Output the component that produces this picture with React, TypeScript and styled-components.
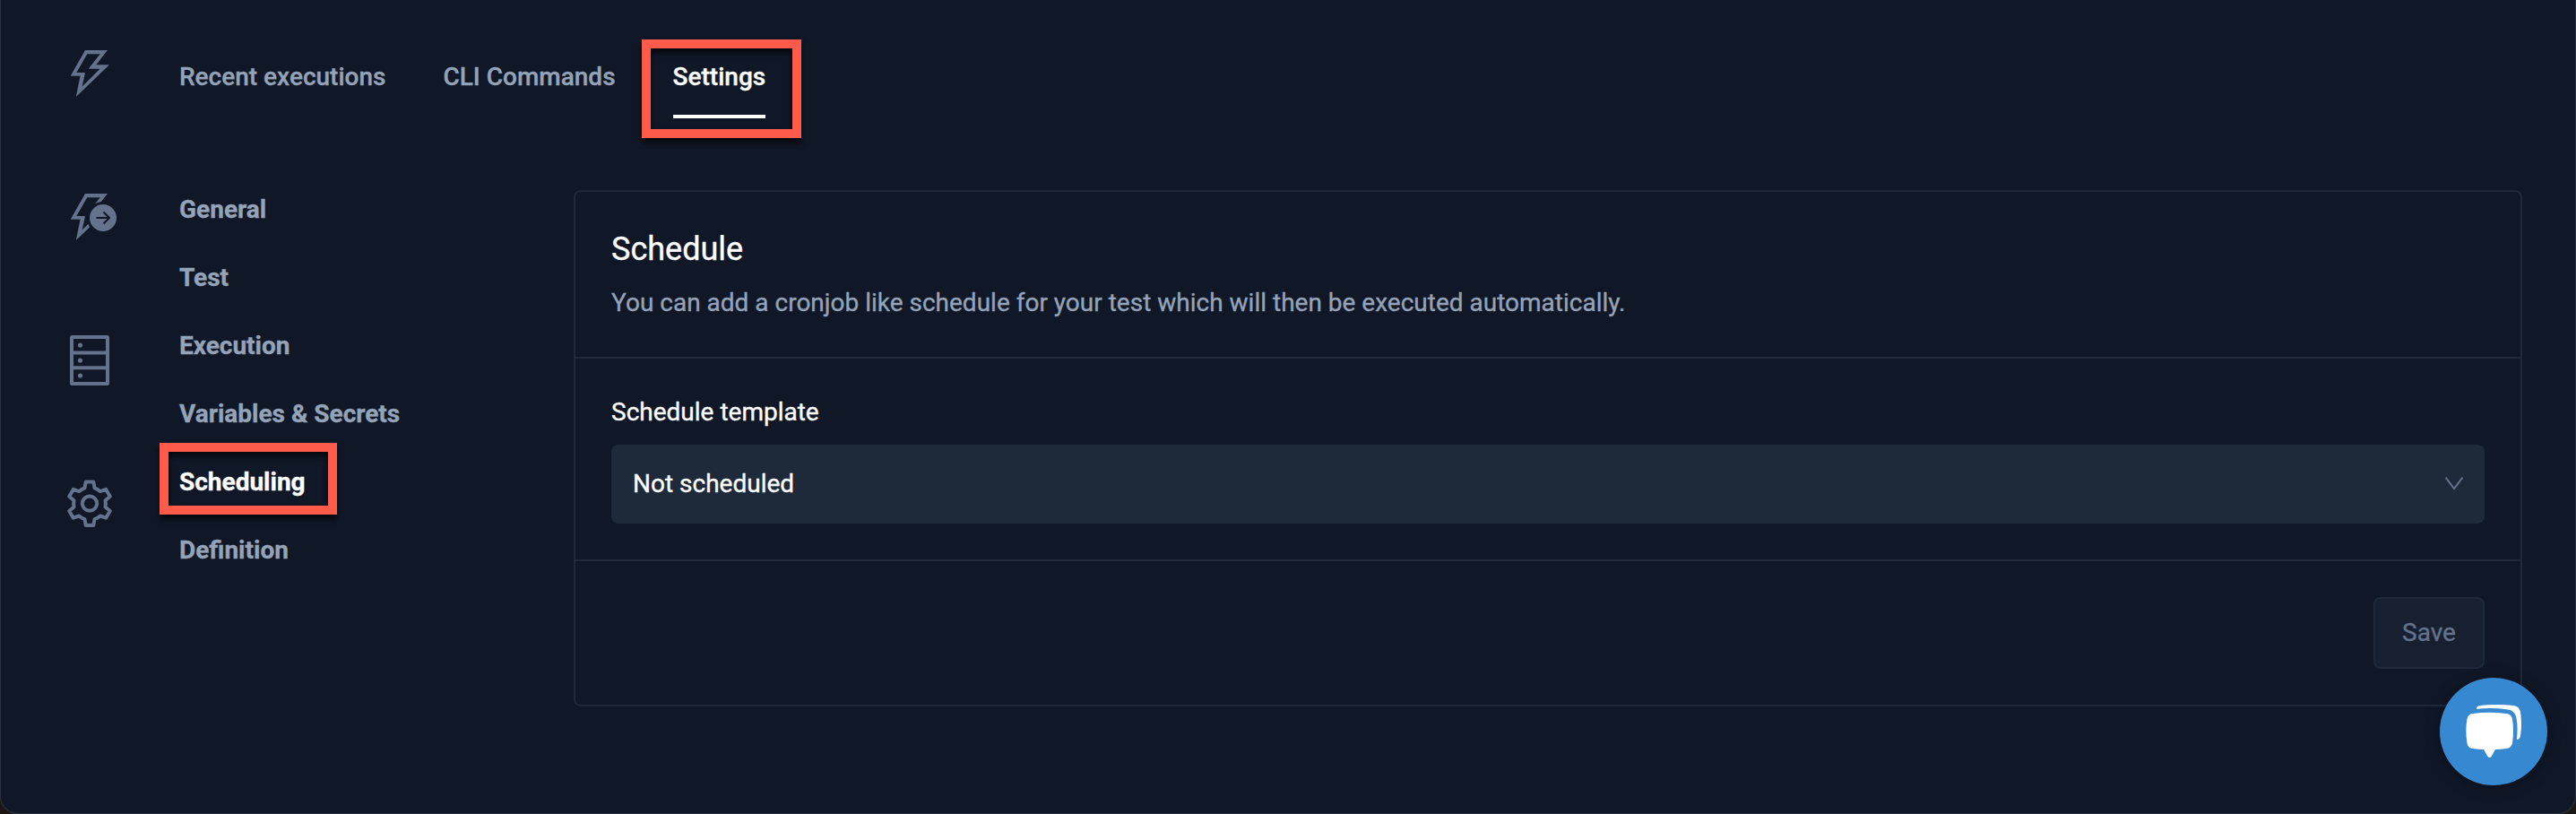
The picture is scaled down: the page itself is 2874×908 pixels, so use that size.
import React from "react";
import styled, { createGlobalStyle } from "styled-components";

const c = {
  bg: "#101726",
  line: "#1e293a",
  muted: "#94a3b8",
  icon: "#64728c",
  white: "#ffffff",
  red: "#ff5b4a",
  blue: "#3688d1",
};

const GlobalStyle = createGlobalStyle`
  * { box-sizing: border-box; }
  body {
    margin: 0;
    background: #1b1814;
    font-family: Roboto, "Liberation Sans", sans-serif;
    font-size: 28px;
    line-height: 44px;
    color: ${c.white};
    -webkit-text-stroke: 0.35px currentColor;
  }
`;

const Window = styled.div`
  position: relative;
  display: flex;
  width: 2874px;
  height: 908px;
  background: ${c.bg};
  border: 1px solid #2b3340;
  border-top: 0;
  border-radius: 0 0 20px 20px;
  overflow: hidden;
`;

const Rail = styled.nav`
  display: flex;
  flex-direction: column;
  align-items: center;
  gap: 96px;
  width: 198px;
  padding: 50px 0 0 0;
  svg { display: block; }
`;

const Content = styled.main`
  display: flex;
  flex-direction: column;
  flex: 1;
  min-width: 0;
  padding: 0 59px 0 1px;
`;

const Tabs = styled.div`
  display: flex;
  gap: 64px;
  padding-top: 64px;
  height: 212px;
`;

const Tab = styled.div<{ $active?: boolean }>`
  position: relative;
  height: 68px;
  font-weight: 500;
  white-space: nowrap;
  color: ${(p) => (p.$active ? c.white : c.muted)};
  border-bottom: 4px solid ${(p) => (p.$active ? c.white : "transparent")};
`;

const Highlight = styled.span<{ $top: number; $left: number; $w: number; $h: number }>`
  position: absolute;
  top: ${(p) => p.$top}px;
  left: ${(p) => p.$left}px;
  width: ${(p) => p.$w}px;
  height: ${(p) => p.$h}px;
  border: 10px solid ${c.red};
  filter: drop-shadow(0 5px 3px rgba(0, 0, 0, 0.7));
`;

const Body = styled.div`
  display: flex;
  align-items: flex-start;
`;

const Menu = styled.ul`
  display: flex;
  flex-direction: column;
  gap: 32px;
  width: 440px;
  margin: 0;
  padding: 0;
  list-style: none;
`;

const MenuItem = styled.li<{ $active?: boolean }>`
  position: relative;
  font-weight: 700;
  white-space: nowrap;
  color: ${(p) => (p.$active ? c.white : c.muted)};
`;

const Card = styled.section`
  flex: 1;
  border: 2px solid ${c.line};
  border-radius: 8px;
`;

const CardHeader = styled.header`
  height: 186px;
  padding: 40px;
  border-bottom: 2px solid ${c.line};
`;

const Title = styled.h2`
  margin: 0 0 14px;
  font-size: 36px;
  font-weight: 400;
  line-height: 48px;
`;

const Description = styled.p`
  margin: 0;
  color: ${c.muted};
`;

const CardBody = styled.div`
  height: 226px;
  padding: 38px 40px 40px;
  border-bottom: 2px solid ${c.line};
`;

const Label = styled.label`
  display: block;
  margin-bottom: 14px;
`;

const Select = styled.div`
  display: flex;
  align-items: center;
  justify-content: space-between;
  height: 88px;
  padding: 0 22px 0 24px;
  background: ${c.line};
  border-radius: 8px;
`;

const CardFooter = styled.footer`
  display: flex;
  justify-content: flex-end;
  height: 160px;
  padding: 40px;
`;

const SaveButton = styled.button`
  width: 124px;
  height: 80px;
  padding: 0;
  font: inherit;
  color: ${c.icon};
  background: #172030;
  border: 2px solid ${c.line};
  border-radius: 8px;
`;

const Chat = styled.button`
  position: absolute;
  right: 31px;
  bottom: 31px;
  width: 120px;
  height: 120px;
  padding: 0;
  border: 0;
  border-radius: 50%;
  background: ${c.blue};
  box-shadow: 0 2px 16px rgba(0, 0, 0, 0.35);
  svg { display: block; }
`;

const boltPath =
  "M23 6H48L35.300 22.300H50L12.800 58L17.500 34.800H6.700ZM25.300 10.300L13.300 31H23L19.700 46.500L39.500 26.700H26.700L39.700 10.300Z";

const BoltIcon = () => (
  <svg width="56" height="64" viewBox="0 0 56 64">
    <path d={boltPath} fill={c.icon} fillRule="evenodd" />
  </svg>
);

const BoltArrowIcon = () => (
  <svg width="56" height="64" viewBox="0 0 56 64" overflow="visible" fill="none">
    <path d={boltPath} fill={c.icon} fillRule="evenodd" />
    <circle cx="43" cy="33" r="18" fill={c.bg} />
    <circle cx="43" cy="33" r="15" fill={c.icon} />
    <path d="M35.5 33H49.500M43.500 26.500L50 33L43.500 39.500" stroke={c.bg} strokeWidth="2" />
  </svg>
);

const ServerIcon = () => (
  <svg width="56" height="64" viewBox="0 0 56 64" fill="none" stroke={c.icon}>
    <rect x="8" y="6" width="40" height="52" rx="0.5" strokeWidth="4" />
    <path d="M8 23.5H48M8 40.300H48" strokeWidth="4" />
    <g fill={c.icon} stroke="none">
      <circle cx="17.5" cy="15" r="2.6" />
      <circle cx="17.5" cy="32" r="2.6" />
      <circle cx="17.5" cy="49" r="2.6" />
    </g>
  </svg>
);

const GearIcon = () => (
  <svg width="56" height="64" viewBox="0 0 56 64" fill="none" stroke={c.icon} strokeWidth="4" strokeLinejoin="round">
    <path d="M23.8 7.500H32.2L33.6 14.400Q37.2 15.700 39.8 18.100L46.2 15.900L50.8 23.700L45.5 28.200Q46.3 31.800 45.5 35.400L50.8 39.900L46.2 47.700L39.8 45.500Q37.2 47.900 33.6 49.200L32.2 56H23.8L22.4 49.200Q18.8 47.900 16.2 45.500L9.8 47.700L5.2 39.900L10.5 35.400Q9.7 31.800 10.5 28.200L5.2 23.700L9.8 15.900L16.2 18.100Q18.8 15.700 22.4 14.400Z" />
    <circle cx="28" cy="31.600" r="8.200" />
  </svg>
);

const ChevronIcon = () => (
  <svg width="24" height="20" viewBox="0 0 24 20" fill="none" stroke={c.icon} strokeWidth="2">
    <path d="M2.6 2.6L12 15L21.4 2.6" />
  </svg>
);

const ChatIcon = () => (
  <svg width="120" height="120" viewBox="0 0 120 120" fill="#fff">
    <path d="M41 35Q40.500 32 45 31Q62 29 82 31Q89 32 90 38Q92 52 90 65Q89 69 86 69Q87.500 52 85 43Q83 36.500 76 35.500Q58 33 41 35Z" />
    <path d="M37 40Q55 37.500 74 40Q80 40.500 81 46Q83 59 81 73Q80 78.500 74 79Q68 79.800 62 80L57.500 88Q55.500 90 53.500 88L49 80Q43 79.800 37 79Q31 78.500 30.500 73Q28.200 59 30.500 46Q31.500 40.500 37 40Z" />
  </svg>
);

const menu = ["General", "Test", "Execution", "Variables & Secrets", "Scheduling", "Definition"];

export default function App() {
  return (
    <>
      <GlobalStyle />
      <Window>
        <Rail>
          <BoltIcon />
          <BoltArrowIcon />
          <ServerIcon />
          <GearIcon />
        </Rail>
        <Content>
          <Tabs>
            <Tab>Recent executions</Tab>
            <Tab>CLI Commands</Tab>
            <Tab $active>
              Settings
              <Highlight $top={-20} $left={-35} $w={178} $h={110} />
            </Tab>
          </Tabs>
          <Body>
            <Menu>
              {menu.map((item) => (
                <MenuItem key={item} $active={item === "Scheduling"}>
                  {item}
                  {item === "Scheduling" && <Highlight $top={-22} $left={-22} $w={198} $h={80} />}
                </MenuItem>
              ))}
            </Menu>
            <Card>
              <CardHeader>
                <Title>Schedule</Title>
                <Description>
                  You can add a cronjob like schedule for your test which will then be executed automatically.
                </Description>
              </CardHeader>
              <CardBody>
                <Label>Schedule template</Label>
                <Select>
                  Not scheduled
                  <ChevronIcon />
                </Select>
              </CardBody>
              <CardFooter>
                <SaveButton>Save</SaveButton>
              </CardFooter>
            </Card>
          </Body>
        </Content>
        <Chat>
          <ChatIcon />
        </Chat>
      </Window>
    </>
  );
}
